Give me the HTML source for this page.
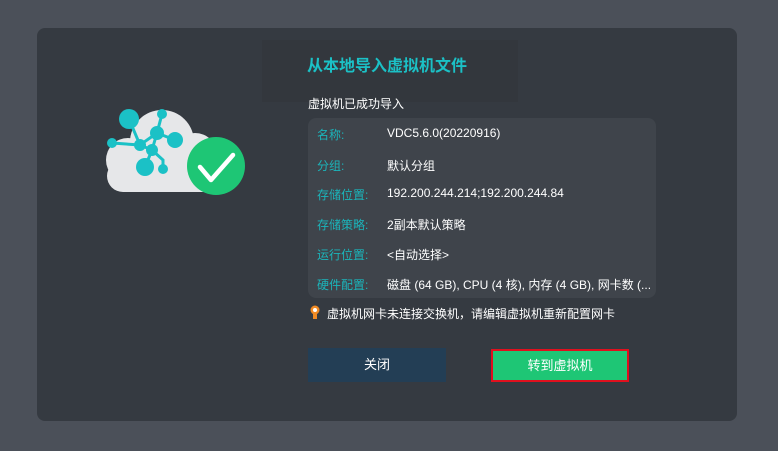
<html><head><style>
body{margin:0;width:778px;height:451px;background:#4b5059;font-family:"Liberation Sans","Noto Sans CJK SC",sans-serif;position:relative;overflow:hidden}
.dlg{position:absolute;left:37px;top:28px;width:700px;height:393px;background:#353a41;border-radius:8px}
.tb{position:absolute;left:262px;top:40px;width:256px;height:62px;background:#33373d}
.t{position:absolute;left:307px;top:52px;font-size:16px;font-weight:bold;color:#1bc1c6}
.s{position:absolute;left:308px;top:95px;font-size:12px;color:#fff}
.box{position:absolute;left:308px;top:118px;width:348px;height:180px;background:#3f444b;border-radius:8px}
.r{position:absolute;left:317px;font-size:12px;color:#1bb5bb}
.v{position:absolute;left:387px;font-size:12px;color:#fff;white-space:nowrap}
.w{position:absolute;left:327px;top:305px;font-size:12px;color:#fff}
.b1{position:absolute;left:308px;top:348px;width:138px;height:34px;background:#233e55;color:#fff;font-size:13px;text-align:center;line-height:34px}
.b2{position:absolute;left:491px;top:349px;width:134px;height:29px;background:#1ec675;border:2px solid #e0101e;color:#fff;font-size:13px;text-align:center;line-height:29px}
</style></head><body>
<div class="dlg"></div>
<div class="tb"></div>
<svg style="position:absolute;left:90px;top:90px" width="170" height="120" viewBox="0 0 170 120">
<g fill="#e6e7e9"><circle cx="38" cy="70" r="22"/><circle cx="72" cy="52" r="32"/><circle cx="105" cy="65" r="22"/><rect x="17" y="70" width="110" height="32" rx="16"/><rect x="40" y="60" width="80" height="42"/></g>
<g stroke="#1bc1c6" stroke-width="3" fill="none"><path d="M39 29 L50 55 L67 43 L72 24 M67 43 L85 50 M50 55 L22 53 M50 55 L62 60 L55 77 M62 60 L73 70 L73 79 M62 60 L67 43"/></g>
<g fill="#1bc1c6"><circle cx="39" cy="29" r="10"/><circle cx="72" cy="24" r="5"/><circle cx="67" cy="43" r="7"/><circle cx="85" cy="50" r="8"/><circle cx="22" cy="53" r="5"/><circle cx="50" cy="55" r="6"/><circle cx="55" cy="77" r="9"/><circle cx="62" cy="60" r="6"/><circle cx="73" cy="79" r="5"/></g>
<circle cx="126" cy="76" r="29" fill="#1ec675"/>
<path d="M110 77 L121 90 L143 65" stroke="#fff" stroke-width="4.5" fill="none" stroke-linecap="round" stroke-linejoin="round"/>
</svg>
<div class="t">从本地导入虚拟机文件</div>
<div class="s">虚拟机已成功导入</div>
<div class="box"></div>
<div class="r" style="top:126px">名称:</div><div class="v" style="top:126px">VDC5.6.0(20220916)</div>
<div class="r" style="top:157px">分组:</div><div class="v" style="top:157px">默认分组</div>
<div class="r" style="top:186px">存储位置:</div><div class="v" style="top:186px">192.200.244.214;192.200.244.84</div>
<div class="r" style="top:216px">存储策略:</div><div class="v" style="top:216px">2副本默认策略</div>
<div class="r" style="top:246px">运行位置:</div><div class="v" style="top:246px">&lt;自动选择&gt;</div>
<div class="r" style="top:276px">硬件配置:</div><div class="v" style="top:276px">磁盘 (64 GB), CPU (4 核), 内存 (4 GB), 网卡数 (...</div>
<svg style="position:absolute;left:310px;top:305px" width="12" height="16"><circle cx="5" cy="5" r="4.5" fill="#f08a24"/><rect x="3" y="9" width="4" height="5" fill="#f08a24"/><circle cx="5" cy="5" r="2" fill="#fff"/></svg>
<div class="w">虚拟机网卡未连接交换机，请编辑虚拟机重新配置网卡</div>
<div class="b1">关闭</div>
<div class="b2">转到虚拟机</div>
</body></html>
